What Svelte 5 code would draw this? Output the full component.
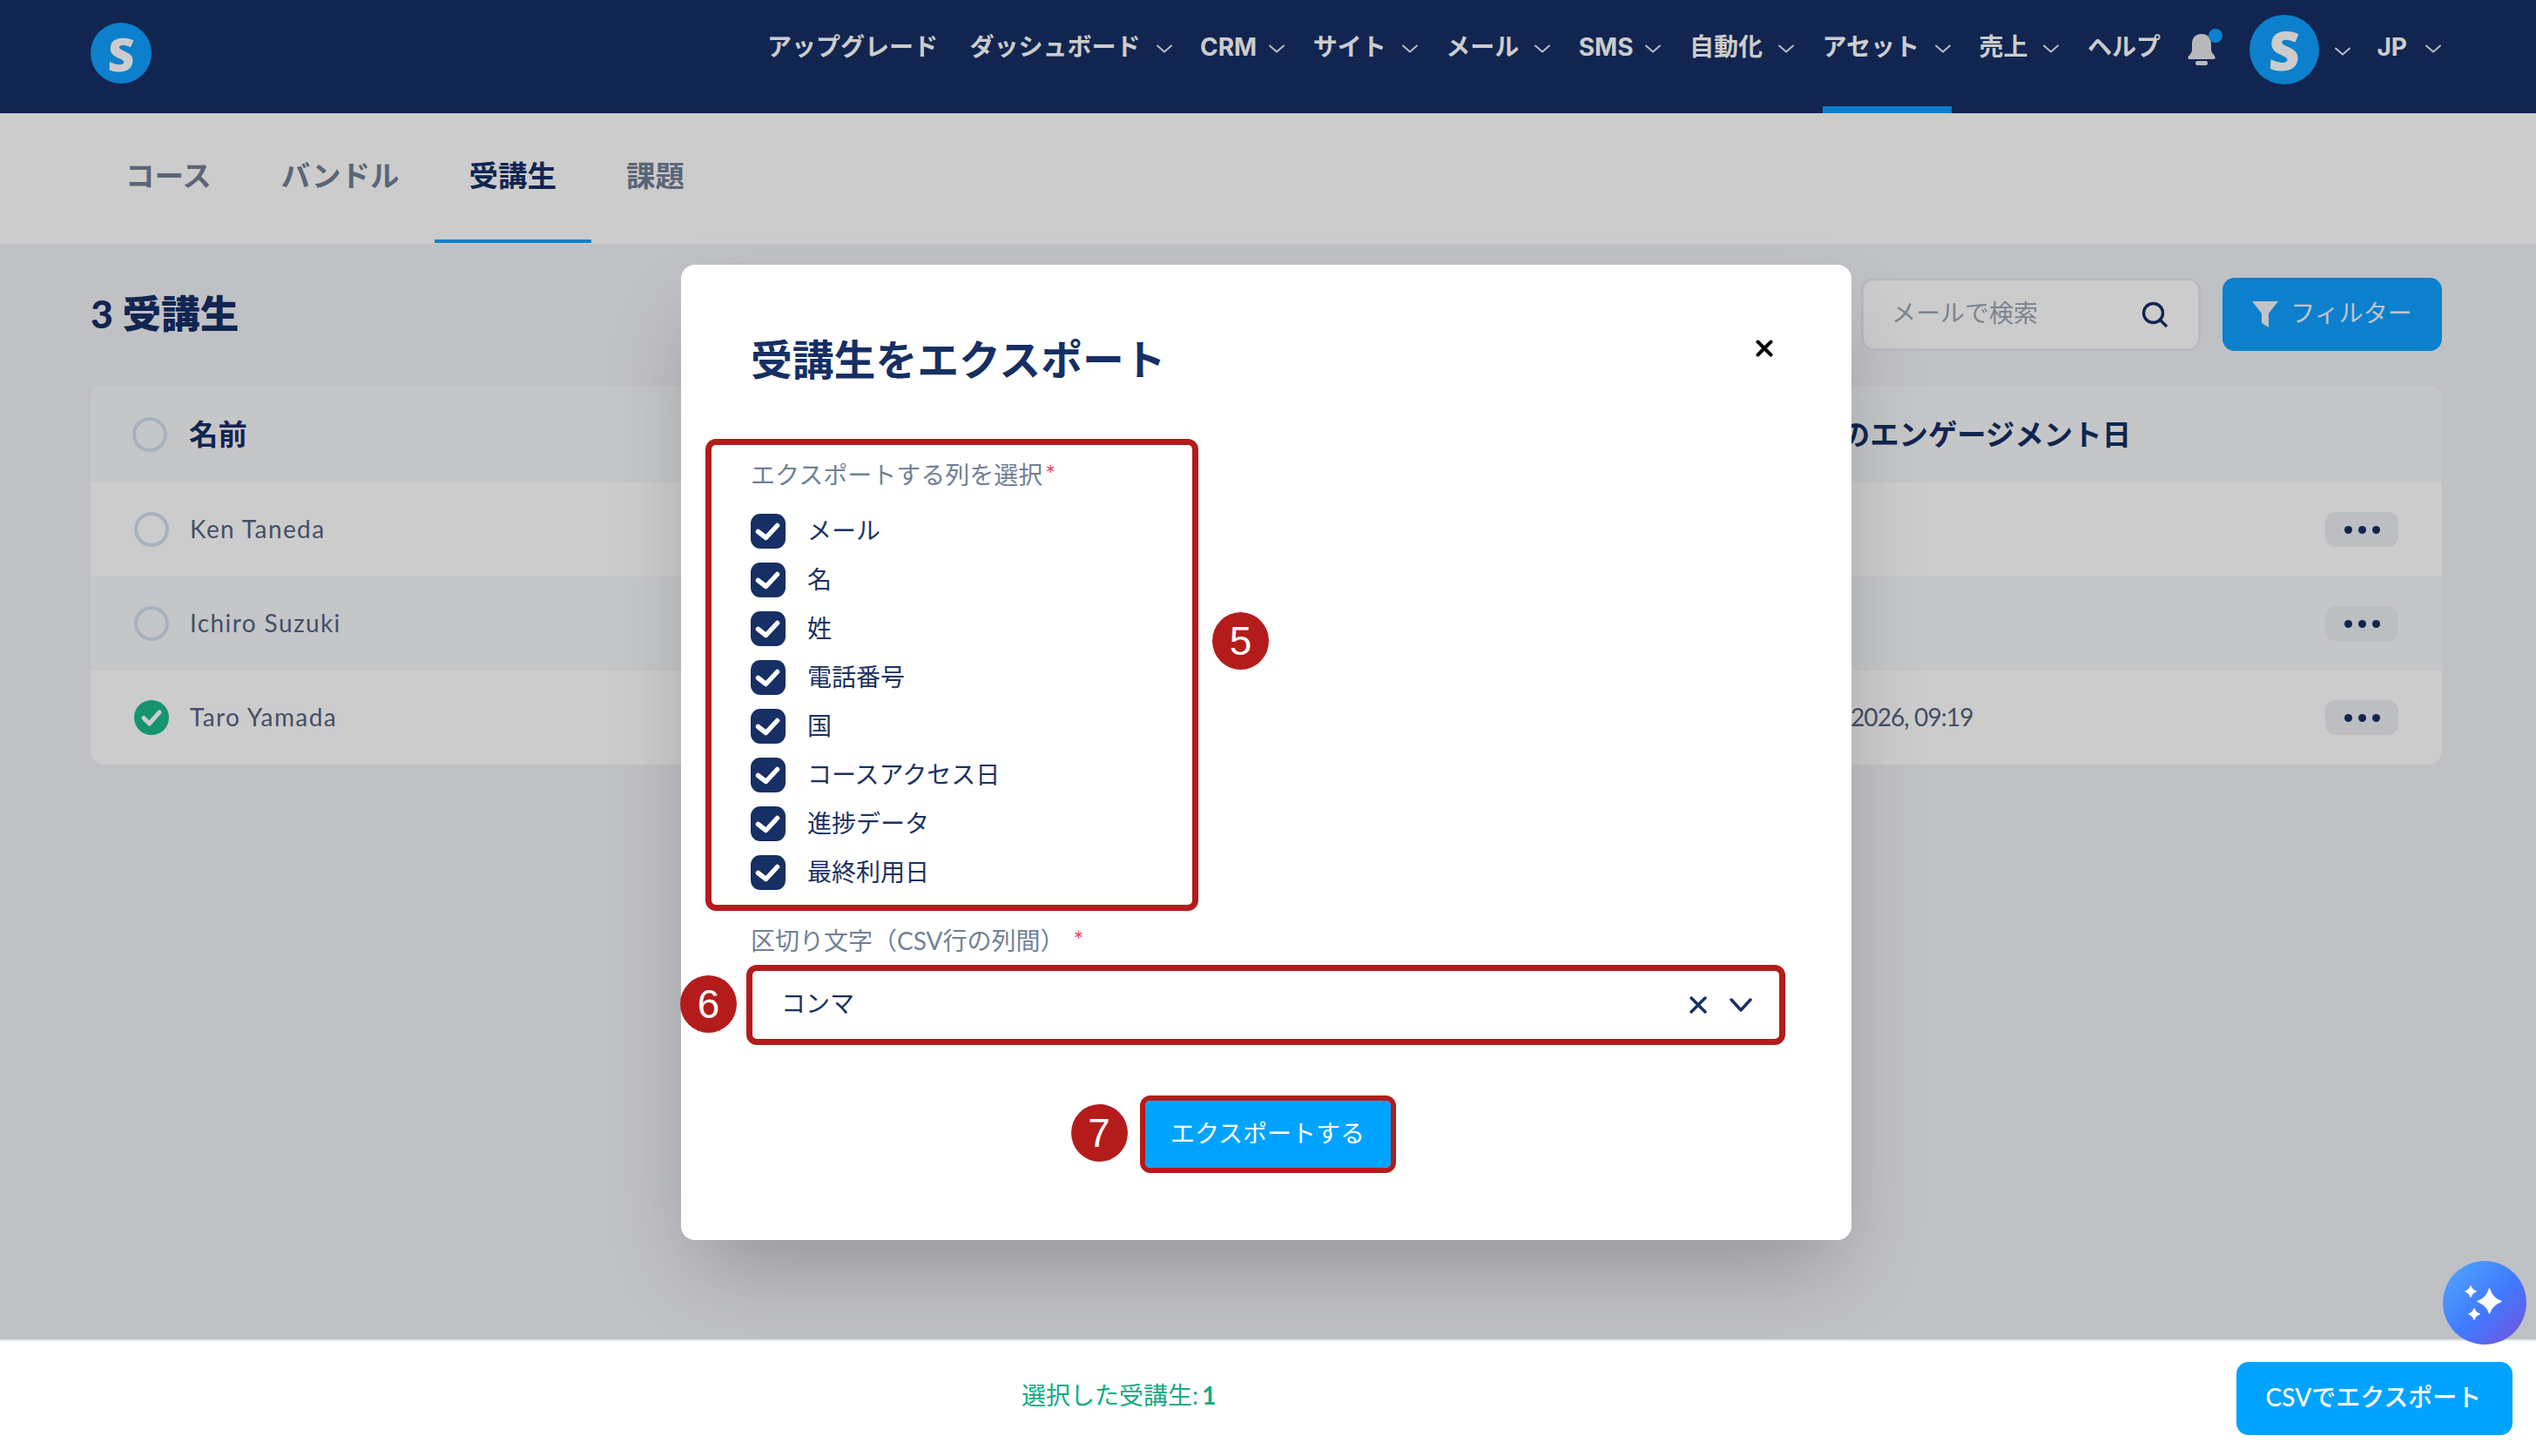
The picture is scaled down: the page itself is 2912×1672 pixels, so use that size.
<script>
	const navItems = [
		{ label: "アップグレード" },
		{ label: "ダッシュボード", menu: true },
		{ label: "CRM", menu: true, latin: true },
		{ label: "サイト", menu: true },
		{ label: "メール", menu: true },
		{ label: "SMS", menu: true, latin: true },
		{ label: "自動化", menu: true },
		{ label: "アセット", menu: true, active: true },
		{ label: "売上", menu: true },
		{ label: "ヘルプ" }
	];
	const tabs = ["コース", "バンドル", "受講生", "課題"];
	const students = [
		{ name: "Ken Taneda", date: "" },
		{ name: "Ichiro Suzuki", date: "" },
		{ name: "Taro Yamada", date: "2026, 09:19", checked: true }
	];
	const columns = ["メール", "名", "姓", "電話番号", "国", "コースアクセス日", "進捗データ", "最終利用日"];
</script>

{#snippet chevron()}
	<svg class="chevron" viewBox="0 0 20 10" fill="none" stroke="currentColor" stroke-width="2" stroke-linecap="round" stroke-linejoin="round">
		<path d="M2 1.500l8 7 8-7" />
	</svg>
{/snippet}

<div class="page">
	<header class="topbar">
		<div class="logo"><span>S</span></div>
		<nav class="nav">
			{#each navItems as item}
				<div class="nav-item" class:active={item.active} class:latin={item.latin}>
					<span>{item.label}</span>
					{#if item.menu}{@render chevron()}{/if}
				</div>
			{/each}
			<div class="bell">
				<svg viewBox="0 0 32 36" width="32" height="36" fill="#e6e7ec">
					<path d="M16 0C8 0 5 5 5 12v6c0 4-3 6-4.500 8.500C0 28 1 29 2.500 29h27c1.500 0 2.500-1 2-2.500C31 24 27 22 27 18v-6C27 5 24 0 16 0z" />
					<rect x="9" y="31" width="14" height="5" rx="2" />
				</svg>
				<span class="bell-dot"></span>
			</div>
			<div class="avatar-wrap">
				<div class="avatar"><span>S</span></div>
				{@render chevron()}
			</div>
			<div class="nav-item lang"><span>JP</span>{@render chevron()}</div>
		</nav>
	</header>

	<div class="tabs">
		{#each tabs as tab}
			<div class="tab" class:current={tab === "受講生"}>{tab}</div>
		{/each}
	</div>

	<main class="content">
		<div class="toolbar">
			<h1>3 受講生</h1>
			<div class="tools">
				<div class="search">
					<span>メールで検索</span>
					<svg viewBox="0 0 30 30" width="30" height="30" fill="none" stroke="#162f64" stroke-width="3.400" stroke-linecap="round">
						<circle cx="13.500" cy="13.500" r="11" />
						<path d="M21.500 21.500L28 28" />
					</svg>
				</div>
				<button class="filter">
					<svg viewBox="0 0 30 30" width="30" height="30"><path d="M0 0h30L19 14v16l-8-5V14z" fill="#f4f6f9" /></svg>
					<span>フィルター</span>
				</button>
			</div>
		</div>

		<div class="table">
			<div class="row head">
				<div class="name-cell"><span class="radio"></span><span class="head-text">名前</span></div>
				<div class="date-cell"><span class="head-text">最後のエンゲージメント日</span></div>
				<div></div>
			</div>
			{#each students as s, i}
				<div class="row" class:odd={i % 2 === 1}>
					<div class="name-cell">
						{#if s.checked}
							<svg class="radio-on" viewBox="0 0 40 40">
								<circle cx="20" cy="20" r="20" fill="#1cb88b" />
								<path d="M11 20.500l6.500 6.500L29 14" fill="none" stroke="#fff" stroke-width="5" stroke-linecap="round" stroke-linejoin="round" />
							</svg>
						{:else}
							<span class="radio"></span>
						{/if}
						<span class="student">{s.name}</span>
					</div>
					<div class="date-cell value">{s.date}</div>
					<button class="dots" aria-label="more"><i></i><i></i><i></i></button>
				</div>
			{/each}
		</div>
	</main>

	<footer class="footer">
		<div class="selected">選択した受講生: <b>1</b></div>
		<button class="csv">CSVでエクスポート</button>
	</footer>

	<button class="ai" aria-label="AI">
		<svg viewBox="0 0 96 96" width="96" height="96" fill="#fff" stroke="#fff" stroke-width="1.500" stroke-linejoin="round">
			<path d="M53.500 32Q56.500 43 67 46.500Q56.500 50 53.500 60Q50.500 50 40 46.500Q50.500 43 53.500 32z" />
			<path d="M32 29Q33.500 33.500 38 35Q33.500 36.500 32 41Q30.500 36.500 26 35Q30.500 33.500 32 29z" />
			<path d="M36 55Q37.500 59.500 42 61Q37.500 62.500 36 67Q34.500 62.500 30 61Q34.500 59.500 36 55z" />
		</svg>
	</button>

	<div class="overlay">
		<section class="modal">
			<h2>受講生をエクスポート</h2>
			<svg class="close" viewBox="0 0 20 20" width="20" height="20" stroke="#000" stroke-width="4" stroke-linecap="round">
				<path d="M2.500 2.500l15 15M17.500 2.500l-15 15" />
			</svg>

			<div class="columns-box">
				<div class="field-label">エクスポートする列を選択<em>*</em></div>
				<div class="checks">
					{#each columns as col}
						<div class="check">
							<svg viewBox="0 0 40 40" width="40" height="40">
								<rect width="40" height="40" rx="11" fill="#162f64" />
								<path d="M8.500 20.500l9 7L30.500 13.500" fill="none" stroke="#fff" stroke-width="5.500" stroke-linecap="round" stroke-linejoin="round" />
							</svg>
							<span>{col}</span>
						</div>
					{/each}
				</div>
				<span class="badge badge-5">5</span>
			</div>

			<div class="field-label sep-label">区切り文字（CSV行の列間）<em class="gap">*</em></div>
			<div class="select-box">
				<span>コンマ</span>
				<svg viewBox="0 0 20 20" width="20" height="20" stroke="#162f64" stroke-width="3.400" stroke-linecap="round">
					<path d="M2 2l16 16M18 2L2 18" />
				</svg>
				<svg viewBox="0 0 26 16" width="26" height="16" fill="none" stroke="#162f64" stroke-width="3.400" stroke-linecap="round" stroke-linejoin="round">
					<path d="M2 2l11 12L24 2" />
				</svg>
				<span class="badge badge-6">6</span>
			</div>

			<div class="submit-row">
				<div class="submit-box">
					<button><span>エクスポートする</span></button>
					<span class="badge badge-7">7</span>
				</div>
			</div>
		</section>
	</div>
</div>

<style>
	:global(body) {
		margin: 0;
	}

	.page {
		position: relative;
		width: 2912px;
		height: 1672px;
		display: flex;
		flex-direction: column;
		overflow: hidden;
		background: #f1f2f7;
		font-family: Lato, "Noto Sans CJK JP", sans-serif;
		font-size: 28px;
		color: #162f64;
	}

	button {
		font-family: inherit;
		border: 0;
		cursor: pointer;
	}

	/* top bar */
	.topbar {
		height: 130px;
		flex: none;
		box-sizing: border-box;
		padding: 0 108px 0 104px;
		display: flex;
		justify-content: space-between;
		background: #162f64;
		color: #fff;
	}

	.logo,
	.avatar {
		display: flex;
		align-items: center;
		justify-content: center;
		border-radius: 50%;
		background: #0fa0ff;
		color: #fff;
		font-family: "Open Sans", sans-serif;
		font-weight: 800;
	}

	.logo span,
	.avatar span {
		transform: skewX(-2deg);
	}

	.logo {
		width: 70px;
		height: 70px;
		margin-top: 26px;
		font-size: 53px;
	}

	.nav {
		display: flex;
		gap: 31.500px;
		height: 130px;
		font-family: Inter, "Noto Sans CJK JP", sans-serif;
	}

	.nav-item {
		display: flex;
		align-items: flex-start;
		gap: 17px;
		padding-top: 34px;
		box-sizing: border-box;
		height: 130px;
		font-weight: 700;
		line-height: 40px;
		border-bottom: 8px solid transparent;
	}

	.nav-item:first-child {
		margin-right: 5px;
	}

	.nav-item.latin {
		gap: 13px;
	}

	.nav-item.active {
		border-bottom-color: #0fa0ff;
	}

	.lang {
		gap: 20px;
	}

	.chevron {
		width: 20px;
		height: 10px;
		flex: none;
		margin-top: 17px;
		color: #e8ebf2;
	}

	.bell {
		position: relative;
		width: 32px;
		margin: 39px 0 0 0;
	}

	.bell-dot {
		position: absolute;
		left: 24px;
		top: -6px;
		width: 16px;
		height: 16px;
		border-radius: 50%;
		background: #0fa0ff;
	}

	.avatar-wrap {
		display: flex;
		align-items: flex-start;
		gap: 17px;
		margin-left: 7px;
		margin-right: -2px;
		padding-top: 17px;
	}

	.avatar {
		width: 80px;
		height: 80px;
		font-size: 62px;
	}

	.avatar-wrap .chevron {
		margin-top: 37px;
	}

	/* sub tabs */
	.tabs {
		height: 150px;
		flex: none;
		box-sizing: border-box;
		padding-left: 104px;
		display: flex;
		background: #fff;
	}

	.tab {
		padding: 50px 40px 0;
		box-sizing: border-box;
		height: 149px;
		font-size: 33.500px;
		line-height: 42px;
		font-weight: 700;
		color: #718096;
		border-bottom: 4px solid transparent;
	}

	.tab.current {
		color: #162f64;
		border-bottom-color: #0fa0ff;
	}

	/* page body */
	.content {
		flex: 1;
		padding: 39px 108px 0 104px;
	}

	.toolbar {
		display: flex;
		justify-content: space-between;
		align-items: center;
		height: 84px;
		margin-bottom: 40px;
	}

	h1 {
		margin: -2px 0 0;
		font-size: 44.600px;
		line-height: 60px;
		font-weight: 900;
	}

	.tools {
		display: flex;
		gap: 25px;
	}

	.search {
		width: 390px;
		height: 84px;
		box-sizing: border-box;
		padding: 0 35px 0 32px;
		display: flex;
		align-items: center;
		justify-content: space-between;
		background: #fff;
		border: 3px solid #e6e9ef;
		border-radius: 14px;
		color: #9aa5b5;
	}

	.search span {
		margin-top: -6px;
	}

	.filter {
		width: 252px;
		height: 84px;
		display: flex;
		align-items: center;
		justify-content: center;
		gap: 14px;
		background: #0fa0ff;
		border-radius: 14px;
		font-size: 28px;
		color: #f4f6f9;
	}

	.filter span {
		margin-top: -6px;
	}

	.table {
		border-radius: 16px;
		overflow: hidden;
		background: #fff;
	}

	.row {
		display: grid;
		grid-template-columns: 1943px 1fr auto;
		align-items: center;
		height: 108px;
		padding-right: 50px;
		background: #fff;
		color: #566381;
	}

	.row.odd {
		background: #f7f8fb;
	}

	.row.head {
		height: 111px;
		background: #f7f8fb;
		color: #162f64;
		font-size: 33.400px;
		font-weight: 700;
	}

	.head-text {
		display: block;
		margin-top: -5px;
	}

	.name-cell {
		display: flex;
		align-items: center;
		gap: 25px;
		padding-left: 50px;
	}

	.head .name-cell {
		padding-left: 48px;
	}

	.student {
		margin: -2px 0 0 -1px;
		letter-spacing: 1.400px;
	}

	.date-cell.value {
		margin-top: -2px;
		padding-left: 78px;
		letter-spacing: -0.900px;
	}

	.radio,
	.radio-on {
		width: 40px;
		height: 40px;
		flex: none;
		box-sizing: border-box;
	}

	.radio {
		border: 4px solid #d3deef;
		border-radius: 50%;
	}

	.dots {
		width: 84px;
		height: 40px;
		display: flex;
		align-items: center;
		justify-content: center;
		gap: 7px;
		padding: 0;
		background: #eceef3;
		border-radius: 12px;
	}

	.dots i {
		width: 9px;
		height: 9px;
		border-radius: 50%;
		background: #162f64;
	}

	/* bottom bar sits above the dimmed layer */
	.footer {
		position: relative;
		z-index: 2;
		height: 134px;
		flex: none;
		box-sizing: border-box;
		padding: 24px 27px 0 1173px;
		display: flex;
		justify-content: space-between;
		background: #fff;
		border-top: 2px solid #e2e8f0;
	}

	.selected {
		margin-top: 18px;
		line-height: 40px;
		color: #12ab82;
	}

	.selected b {
		margin-left: -3px;
	}

	.csv {
		width: 317px;
		height: 84px;
		padding: 0 2px 6px 0;
		background: #00a3ff;
		border-radius: 14px;
		color: #fff;
		font-size: 28px;
		font-weight: 500;
	}

	.ai {
		position: absolute;
		z-index: 3;
		left: 2805px;
		top: 1448px;
		width: 96px;
		height: 96px;
		padding: 0;
		border-radius: 50%;
		background: linear-gradient(135deg, #52a8ff, #4079ff 55%, #7a50d8);
	}

	.ai svg {
		display: block;
	}

	/* modal */
	.overlay {
		position: absolute;
		z-index: 1;
		inset: 0;
		background: rgba(0, 0, 0, 0.2);
	}

	.modal {
		position: absolute;
		left: 782px;
		top: 304px;
		width: 1344px;
		height: 1120px;
		box-sizing: border-box;
		padding: 77px 80px 0;
		background: #fff;
		border-radius: 16px;
		box-shadow: 0 46px 93px -22px rgba(0, 0, 0, 0.25);
	}

	h2 {
		margin: 0 0 59px;
		font-size: 47.800px;
		line-height: 64px;
		font-weight: 700;
	}

	.close {
		position: absolute;
		right: 90px;
		top: 86px;
	}

	.columns-box {
		position: relative;
		width: 566px;
		box-sizing: border-box;
		margin-left: -52px;
		padding: 14px 0 17px 45px;
		border: 7px solid #b41c1c;
		border-radius: 12px;
	}

	.field-label {
		line-height: 40px;
		color: #718096;
	}

	.field-label em {
		font-style: normal;
		color: #f43f5e;
		margin-left: 3px;
	}

	.field-label em.gap {
		margin-left: 10px;
	}

	.checks {
		display: flex;
		flex-direction: column;
		gap: 16px;
		margin-top: 25px;
	}

	.check {
		display: flex;
		align-items: center;
		gap: 25px;
		height: 40px;
		color: #1b3161;
	}

	.check span {
		margin-top: -5px;
	}

	.sep-label {
		margin-top: 14px;
	}

	.select-box {
		position: relative;
		width: 1193px;
		height: 92px;
		box-sizing: border-box;
		margin: 8px 0 0 -5px;
		padding: 0 31px 0 33px;
		display: flex;
		align-items: center;
		gap: 26px;
		border: 7px solid #b41c1c;
		border-radius: 12px;
	}

	.select-box span:first-child {
		margin-right: auto;
		margin-top: -6px;
	}

	.submit-row {
		display: flex;
		justify-content: center;
		margin-top: 58px;
		padding-left: 3px;
	}

	.submit-box {
		position: relative;
		border: 6px solid #b41c1c;
		border-radius: 12px;
	}

	.submit-box button {
		display: block;
		width: 282px;
		height: 77px;
		padding: 0 0 6px;
		background: #00a3ff;
		border-radius: 6px;
		color: #fff;
		font-size: 28px;
	}

	.badge {
		position: absolute;
		width: 65px;
		height: 66px;
		display: flex;
		align-items: center;
		justify-content: center;
		border-radius: 50%;
		background: #b41c1c;
		color: #fff;
		font-family: "Liberation Sans", sans-serif;
		font-size: 46px;
	}

	.badge-5 {
		left: 575px;
		top: 192px;
	}

	.badge-6 {
		left: -83px;
		top: 5px;
	}

	.badge-7 {
		left: -85px;
		top: 4px;
	}
</style>
